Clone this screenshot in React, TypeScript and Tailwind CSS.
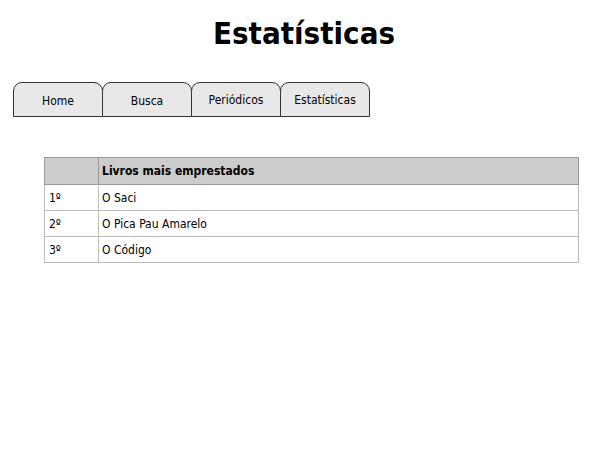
const tabs = ["Home", "Busca", "Periódicos", "Estatísticas"];

const livros = [
  ["1º", "O Saci"],
  ["2º", "O Pica Pau Amarelo"],
  ["3º", "O Código"],
];

export default function App() {
  return (
    <div className="w-[608px] h-[467px] bg-white text-black font-['Comic_Sans_MS','DejaVu_Sans_Condensed','DejaVu_Sans',sans-serif]">
      <h1 className="pt-[14px] text-center text-[31px] font-bold leading-[38px]">Estatísticas</h1>

      <div className="mt-[30px] ml-[13px] flex">
        {tabs.map((t, i) => (
          <div
            key={t}
            className={`flex h-[35px] w-[90px] items-center justify-center rounded-t-[9px] border border-[#333] bg-[#e8e8e8] text-[12px] -ml-px first:ml-0 ${i < 2 ? "pt-[3px]" : "pt-0"}`}
          >
            {t}
          </div>
        ))}
      </div>

      <table className="mt-[40px] ml-[44px] w-[535px] border-collapse text-[12px]">
        <thead>
          <tr className="h-[27px] bg-[#cccccc]">
            <th className="w-[54px] border border-[#999]"></th>
            <th className="border border-[#999] pl-[3px] text-left font-bold">Livros mais emprestados</th>
          </tr>
        </thead>
        <tbody>
          {livros.map(([pos, nome]) => (
            <tr key={pos} className="h-[26px]">
              <td className="border border-[#bbb] pl-[4px]">{pos}</td>
              <td className="border border-[#bbb] pl-[3px]">{nome}</td>
            </tr>
          ))}
        </tbody>
      </table>
    </div>
  );
}
